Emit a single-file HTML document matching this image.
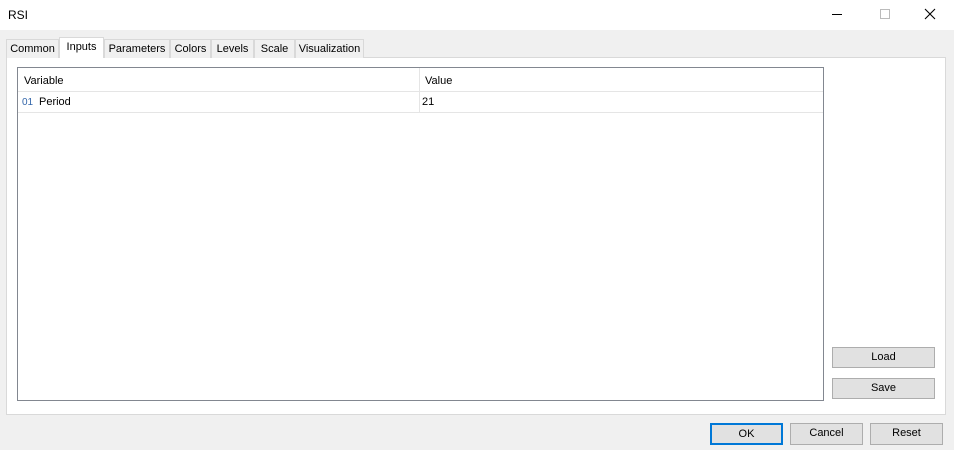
<!DOCTYPE html><html><head><style>
*{margin:0;padding:0;box-sizing:border-box}
body{width:954px;height:450px;background:#f0f0f0;font-family:"Liberation Sans",sans-serif;font-size:11px;color:#000;position:relative;overflow:hidden}
.a{position:absolute}
.title{left:0;top:0;width:954px;height:30px;background:#fff}
.tab{top:39px;height:19px;border:1px solid #d9d9d9;border-bottom:none;background:#f0f0f0;text-align:center;line-height:18px}
.btn{background:#e1e1e1;border:1px solid #adadad;text-align:center;line-height:19px}
</style></head><body>
<div class="a title"><span class="a" style="left:8px;top:8px;font-size:12px">RSI</span>
<div class="a" style="left:832px;top:14px;width:10px;height:1px;background:#000"></div>
<div class="a" style="left:880px;top:9px;width:10px;height:10px;border:1px solid #bbb"></div>
<svg class="a" style="left:924px;top:8px" width="12" height="12"><path d="M1 1L11 11M11 1L1 11" stroke="#000" stroke-width="1.1"/></svg>
</div>
<div class="a" style="left:6px;top:57px;width:940px;height:358px;background:#fff;border:1px solid #d9d9d9"></div>
<div class="a tab" style="left:6px;width:53px">Common</div>
<div class="a tab" style="left:59px;top:37px;height:21px;width:45px;background:#fff;line-height:19px">Inputs</div>
<div class="a tab" style="left:104px;width:66px">Parameters</div>
<div class="a tab" style="left:170px;width:41px">Colors</div>
<div class="a tab" style="left:211px;width:43px">Levels</div>
<div class="a tab" style="left:254px;width:41px">Scale</div>
<div class="a tab" style="left:295px;width:69px">Visualization</div>
<div class="a" style="left:17px;top:67px;width:807px;height:334px;border:1px solid #828790;background:#fff">
<div class="a" style="left:0;top:0;width:805px;height:24px;border-bottom:1px solid #e5e5e5"></div>
<div class="a" style="left:401px;top:0;width:1px;height:44px;background:#e5e5e5"></div>
<div class="a" style="left:0;top:44px;width:805px;height:1px;background:#e5e5e5"></div>
<span class="a" style="left:6px;top:7px">Variable</span>
<span class="a" style="left:407px;top:7px">Value</span>
<span class="a" style="left:4px;top:29px;color:#3366aa;font-size:10px">01</span>
<span class="a" style="left:21px;top:28px">Period</span>
<span class="a" style="left:404px;top:28px">21</span>
</div>
<div class="a btn" style="left:832px;top:347px;width:103px;height:21px">Load</div>
<div class="a btn" style="left:832px;top:378px;width:103px;height:21px">Save</div>
<div class="a btn" style="left:710px;top:423px;width:73px;height:22px;border:2px solid #0078d7;line-height:18px">OK</div>
<div class="a btn" style="left:790px;top:423px;width:73px;height:22px">Cancel</div>
<div class="a btn" style="left:870px;top:423px;width:73px;height:22px">Reset</div>
</body></html>
